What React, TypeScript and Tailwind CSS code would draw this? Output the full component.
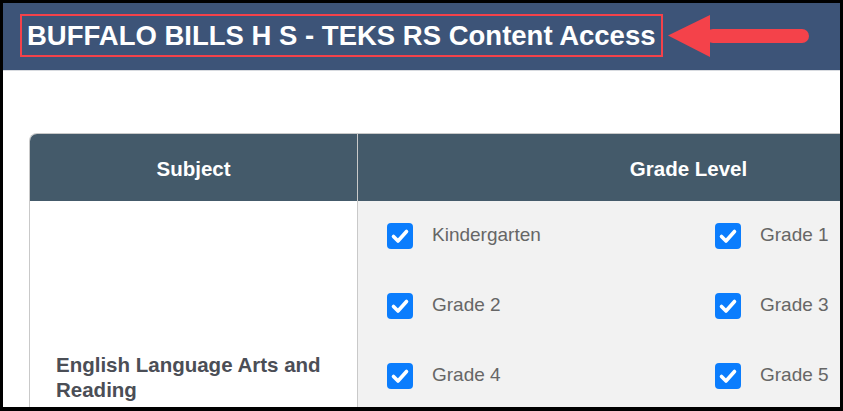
const grades = ["Kindergarten", "Grade 1", "Grade 2", "Grade 3", "Grade 4", "Grade 5"]

function CheckBox() {
  return (
    <span className="flex h-[26px] w-[26px] shrink-0 items-center justify-center rounded-[4px] bg-[#0b7dfd]">
      <svg viewBox="0 0 26 26" className="h-[26px] w-[26px]">
        <path d="M6.5 13.5 L11 18 L19.5 8.5" fill="none" stroke="#fff" strokeWidth="3.6" strokeLinecap="round" strokeLinejoin="round" />
      </svg>
    </span>
  )
}

export default function App() {
  return (
    <div className="h-[411px] w-[843px] overflow-hidden border-[3px] border-b-4 border-black bg-white font-['Liberation_Sans',Arial,sans-serif]">
      <div className="flex h-[68px] items-start border-b border-[#d8dbe0] bg-[#3d5478] pl-[17px] pt-[11px]">
        <div className="flex h-[43px] items-center border-2 border-[#f4424a] px-[5px] pt-[1px] text-[27.5px] font-bold leading-none whitespace-nowrap text-white">
          BUFFALO BILLS H S - TEKS RS Content Access
        </div>
        <svg width="142" height="44" viewBox="0 0 142 44" className="ml-[5px] shrink-0">
          <rect x="38" y="15" width="103" height="14" rx="7" fill="#f4424a" />
          <polygon points="0,21.5 42,1 42,43" fill="#f4424a" />
        </svg>
      </div>

      <div className="ml-[26px] mt-[62px] w-[990px] overflow-hidden rounded-tl-[8px] border-l border-t border-[#c9c9c9]">
        <div className="grid h-[67px] grid-cols-[328px_1fr] bg-[#445a6a] text-[20.5px] font-bold text-white">
          <div className="flex items-center justify-center border-r border-[#c9c9c9] pt-[3px]">Subject</div>
          <div className="flex items-center justify-center pt-[3px]">Grade Level</div>
        </div>
        <div className="grid h-[220px] grid-cols-[328px_1fr]">
          <div className="border-r border-[#c9c9c9] bg-white pl-[26px] pt-[151px] text-[20.5px] font-bold leading-[25px] text-[#4b4e56]">
            English Language Arts and
            <br />
            Reading
          </div>
          <div className="grid grid-cols-[328px_328px] content-start gap-y-[44px] bg-[#f2f2f2] pl-[29px] pt-[21px]">
            {grades.map((g) => (
              <label key={g} className="flex h-[26px] items-center gap-[19px] pt-[1px] text-[19px] text-[#666]">
                <CheckBox />
                <span>{g}</span>
              </label>
            ))}
          </div>
        </div>
      </div>
    </div>
  )
}
